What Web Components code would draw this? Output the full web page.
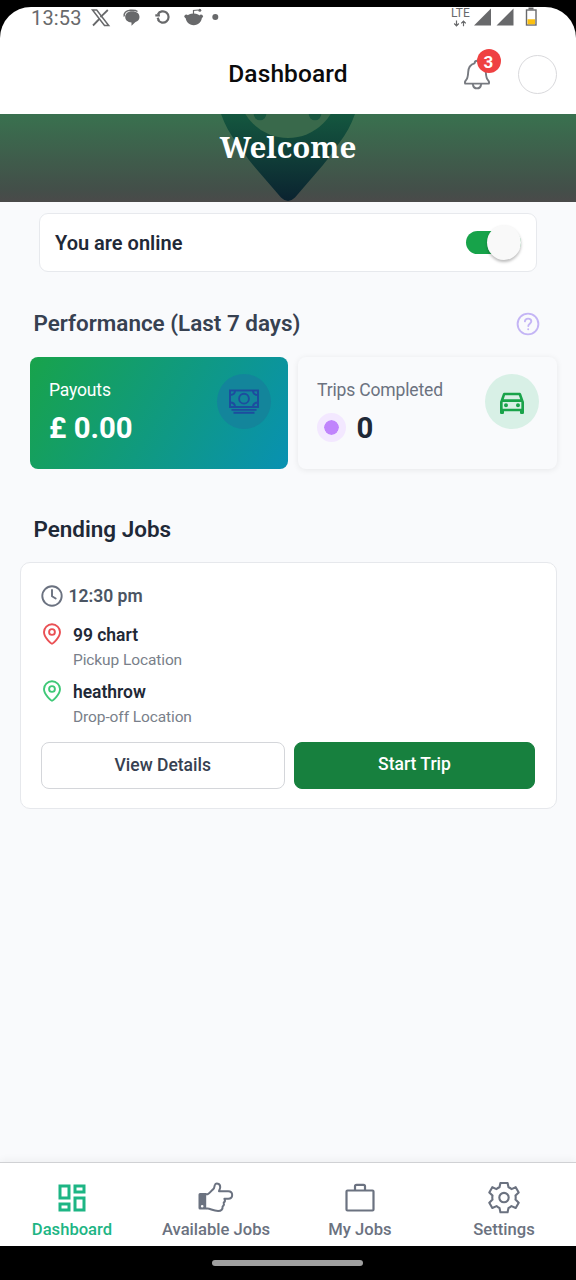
<!DOCTYPE html>
<html lang="en">
<head>
<meta charset="utf-8">
<title>Dashboard</title>
<style>
html,body{margin:0;height:100%;background:#000}
body{font-family:Roboto,"Liberation Sans",sans-serif;overflow:hidden}
</style>
</head>
<body>
<driver-app></driver-app>
<script>
const define = (name, html, setup) => {
  const t = document.createElement('template');
  t.innerHTML = html;
  customElements.define(name, class extends HTMLElement {
    constructor() {
      super();
      this.attachShadow({mode: 'open'}).appendChild(t.content.cloneNode(true));
    }
    connectedCallback() { if (setup) setup(this, this.shadowRoot); }
  });
};

const ICONS = {
  bell: [30, 34, '<g fill="none" stroke="#777a80" stroke-width="1.9" stroke-linejoin="round" stroke-linecap="round"><path d="M3.200 26.600c-.8-1.200-.2-2.200.8-3.400 2-2.200 2-5 2.200-8.200.2-4.300 2.500-7.700 6.300-8.700.3-1.700 1.300-2.500 2.500-2.500s2.200.8 2.500 2.500c3.800 1 6.100 4.400 6.300 8.700.2 3.200.2 6 2.200 8.200 1 1.200 1.600 2.200.8 3.400z"/><path d="M10.800 27c.4 2.900 2 4.400 4.200 4.400s3.800-1.500 4.200-4.400"/></g>'],
  help: [24, 24, '<g fill="none" stroke="#c4b5f5" stroke-width="1.900" stroke-linecap="round"><circle cx="12" cy="12" r="10.400"/><path d="M8.900 9.300c.2-1.800 1.500-2.700 3.200-2.700 1.800 0 3.200 1.100 3.200 2.700 0 2.300-3 2.400-3 4.700"/><path d="M12.200 17.100v.1"/></g>'],
  cash: [30, 26, '<g fill="none" stroke="#1d4c9f" stroke-width="1.900"><rect x="1" y="1.500" width="28" height="16.500"/><circle cx="15" cy="9.700" r="4.900"/><path d="M6 1.500C6 4.300 4 6 1 6M24 1.500C24 4.300 26 6 29 6M6 18c0-2.800-2-4.500-5-4.500M24 18c0-2.800 2-4.500 5-4.500M2.500 20.900h25M4.500 23.800h21"/></g>'],
  car: [32, 32, '<path transform="scale(1.3333)" fill="#19a34a" fill-rule="evenodd" d="M18.900 6C18.700 5.400 18.100 5 17.500 5H6.500C5.800 5 5.300 5.400 5.100 6L3 12V20C3 20.500 3.500 21 4 21H5C5.600 21 6 20.500 6 20V19H18V20C18 20.500 18.500 21 19 21H20C20.500 21 21 20.500 21 20V12L18.900 6M6.800 7H17.100L18.200 10H5.800L6.800 7M19 17H5V12H19V17M7.500 13A1.500 1.500 0 1 1 7.500 16A1.500 1.500 0 1 1 7.500 13M16.500 13A1.500 1.500 0 1 1 16.500 16A1.500 1.500 0 1 1 16.500 13"/>'],
  clock: [22, 22, '<g fill="none" stroke="#6b7280" stroke-width="1.900" stroke-linecap="round" stroke-linejoin="round"><circle cx="11" cy="11" r="9.700"/><path d="M11 5v6.200l3.700 2.300"/></g>'],
  pin: [20, 22, '<g fill="none" stroke="currentColor" stroke-width="1.900" stroke-linejoin="round"><path d="M10 20.700C9 20.700 2 14.600 2 9.100A8 7.800 0 0 1 18 9.100C18 14.600 11 20.700 10 20.700z"/><circle cx="10" cy="9" r="2.900"/></g>'],
  dashboard: [36, 36, '<path transform="scale(1.5)" fill="#1db584" d="M19,5V7H15V5H19M9,5V11H5V5H9M19,13V19H15V13H19M9,17V19H5V17H9M21,3H13V9H21V3M11,3H3V13H11V3M21,11H13V21H21V11M11,15H3V21H11V15Z"/>'],
  hand: [36, 36, '<path fill="#6b7280" fill-rule="evenodd" d="M2 13h6.200v16.500H2a1.500 1.500 0 0 1-1.500-1.500V14.500A1.500 1.500 0 0 1 2 13zM4.200 25a1.300 1.300 0 1 0 0 2.600 1.300 1.300 0 0 0 0-2.600z"/><path fill="none" stroke="#6b7280" stroke-width="2" stroke-linejoin="round" d="M8 14.300h1.500c2.300-1 3.700-3.600 5.800-5.200 1.300-1 .9-2.900 1.700-4.500.8-1.700 5.300-1.500 5.200 2.600-.1 1.700-.9 2.600-1.200 4h9.200c5.300 0 5.300 7.500 0 7.500h-3.800c1 1.800.5 3.200-.7 4 .7 1.800.1 3-1.100 3.800.2 2.700-1.100 4.400-4.500 4.400-5 0-7.700-2.300-10.600-2.300H8"/>'],
  briefcase: [36, 36, '<g fill="none" stroke="#6b7280" stroke-width="2.200" stroke-linejoin="round"><rect x="4.500" y="10.500" width="27" height="20" rx="1"/><path d="M13 10V6.300a1.500 1.500 0 0 1 1.500-1.500h7A1.500 1.500 0 0 1 23 6.300V10"/></g>'],
  gear: [36, 36, '<g transform="translate(18 17.600)" fill="none" stroke="#6b7280" stroke-width="2.100" stroke-linejoin="round"><path d="M-3.600-14.600h7.200l.9 4.300q1.700.6 3 1.800l4.200-1.900 3 5.200-3.200 3.200q.4 2 0 4l3.200 3.200-3 5.200-4.200-1.900q-1.300 1.200-3 1.800l-.9 4.300h-7.200l-.9-4.300q-1.700-.6-3-1.800l-4.200 1.900-3-5.200 3.200-3.200q-.4-2 0-4l-3.200-3.200 3-5.200 4.200 1.900q1.300-1.200 3-1.800z"/><circle r="4.700"/></g>']
};
define('ui-icon', `<style>:host{display:block;flex:none}svg{display:block}</style><svg></svg>`, (el, r) => {
  const [w, h, body] = ICONS[el.getAttribute('name')];
  const svg = r.querySelector('svg');
  svg.setAttribute('width', w); svg.setAttribute('height', h);
  svg.setAttribute('viewBox', `0 0 ${w} ${h}`);
  svg.innerHTML = body;
});

define('status-bar', `<style>
:host{display:flex;height:27px;color:#68696b;box-sizing:border-box;padding:0 38px 0 31px;justify-content:space-between}
.l,.r{display:flex}.l span{font-size:20px;line-height:23px;letter-spacing:.15px;width:51px}
svg{display:block}.lte{font-size:12px;line-height:12px;width:18px}
.net{display:flex;flex-direction:column;width:18px}.net svg{margin:1px 0 0 2px}
</style>
<div class="l"><span>13:53</span>
<svg width="144" height="24" fill="none" stroke="#68696b">
<path d="M10.500 3h4.200l12 15.500h-4.200z" stroke-width="1.500"/><path d="M25.800 3l-7.300 7.200M17.300 12l-6.300 6.500" stroke-width="1.800"/>
<path d="M42.200 9.500c-.8-3 1.800-6 6-6.200 3.500-.2 5.800-.1 7.300 1.200" stroke-width="1.400"/><path d="M50 4.300c4.400 0 7.500 2.200 7.500 5.600 0 2.600-1.600 4.400-4 5.100L49.500 18.800v-3.400c-4-.2-6.300-2.500-6.300-5.400 0-3.300 2.800-5.700 6.800-5.700z" fill="#68696b" stroke="none"/>
<path d="M75.900 7.200A5.700 5.700 0 1 1 75.900 12.800M73.300 8.300h4.600M77 13.800l-1.400-3" stroke-width="2.200"/>
<path d="M103.500 9.500h16.500c0 5-3.600 8.700-8.300 8.700s-8.200-3.700-8.200-8.700z" fill="#68696b" stroke="none"/><ellipse cx="111.500" cy="9.600" rx="6.500" ry="3" fill="#68696b" stroke="none"/><circle cx="104.300" cy="9.300" r="1.900" fill="#68696b" stroke="none"/><circle cx="119" cy="9.300" r="1.900" fill="#68696b" stroke="none"/><path d="M111.500 7.500V3.500l5-.5" stroke-width="1.200"/><circle cx="117.800" cy="3.200" r="1.500" fill="#68696b" stroke="none"/>
<circle cx="133.300" cy="9.900" r="3" fill="#68696b" stroke="none"/></svg></div>
<div class="r"><div class="net"><div class="lte">LTE</div><svg width="14" height="8" fill="none" stroke="#68696b" stroke-width="1.200"><path d="M3.500.5v5M1.200 3.500l2.300 2.300 2.300-2.300M10.500 6.200v-5M8.200 3.300l2.300-2.300 2.300 2.300"/></svg></div>
<svg width="69" height="24"><g fill="#68696b"><path d="M5 18.500L22 1.500v17zM27.500 18.500L44.500 1.500v17z"/><path d="M59.500.5h5v2h-5z"/></g>
<rect x="57.500" y="3" width="9.500" height="15" fill="none" stroke="#68696b" stroke-width="1.400"/><path d="M58.500 12.200h7.500v5h-7.500z" fill="#fbc011"/>
</svg></div>`);

define('app-header', `<style>
:host{display:grid;grid-template-columns:1fr auto 1fr;align-items:center;height:80px;box-sizing:border-box}
h1{margin:0;font-size:24.500px;font-weight:500;color:#0b0b0c;line-height:30px;letter-spacing:.1px}
.actions{display:flex;justify-content:flex-end;align-items:center;gap:25px;padding-right:19.500px}
.bell{position:relative;left:-.5px}
.badge{position:absolute;left:14.500px;top:-8.500px;width:24px;height:24px;border-radius:50%;background:#ef4142;color:#fff;font-weight:700;font-size:17px;line-height:26px;text-align:center}
.avatar{width:37px;height:37px;border:1.500px solid #d9d9dc;border-radius:50%}
</style><span></span><h1><slot></slot></h1>
<div class="actions"><div class="bell"><ui-icon name="bell"></ui-icon><div class="badge">3</div></div><div class="avatar"></div></div>`);

define('welcome-banner', `<style>
:host{display:grid;height:88px;background:linear-gradient(#39714f,#434f49 85%,#4a4a4a);overflow:hidden;justify-items:center;flex:none}
svg,h2{grid-area:1/1}svg{display:block}
h2{margin:0;padding-top:14px;color:#fff;font:700 29.500px/38px "Noto Serif","DejaVu Serif Condensed","DejaVu Serif",serif;z-index:1}
</style>
<svg width="144" height="88"><defs><linearGradient id="g" x1="0" y1="0" x2="0" y2="1"><stop offset="0" stop-color="#14573f"/><stop offset="1" stop-color="#0b2330"/></linearGradient></defs>
<path fill="url(#g)" d="M5 0C9 11 14 20 20 28C27 37 31 44 37 51L65 83.500Q72 90.500 79 83.500L107 51C113 44 117 37 124 28C130 20 135 11 139 0z"/>
<circle cx="72" cy="-26" r="50" fill="#39694b"/><circle cx="44" cy="0" r="6.300" fill="#195740"/><circle cx="99" cy="0" r="6.300" fill="#195740"/></svg>
<h2><slot></slot></h2>`);

define('online-toggle', `<style>
:host{display:flex;align-items:center;justify-content:space-between;height:59px;box-sizing:border-box;margin:0 39px;padding:0 15px 0 15px;background:#fff;border:1.500px solid #e7e9ed;border-radius:9px}
span{font-size:20px;font-weight:600;color:#1f2937;line-height:24px;padding-top:1px}
.track{width:55px;height:23px;border-radius:12px;background:#17a34a;display:flex;justify-content:flex-end;align-items:center}
.knob{width:34px;height:35px;border-radius:50%;background:#f9f9f9;box-shadow:0 2px 3px #0004}
</style><span><slot></slot></span><div class="track"><div class="knob"></div></div>`);

define('section-title', `<style>
:host{display:flex;align-items:center;justify-content:space-between;height:28px;padding:0 36px 0 33.500px;font-size:22.450px;font-weight:600;color:#1f2937}
::slotted(ui-icon){padding-top:1px}
</style><span><slot></slot></span><slot name="end"></slot>`);

define('stat-card', `<style>
:host{display:flex;justify-content:space-between;box-sizing:border-box;height:112px;border-radius:8px;padding:17px 18px 0 19px;background:#f9fafc;box-shadow:0 1px 6px #00000014;color:#6b7280}
:host([tone=green]){background:linear-gradient(120deg,#18a34b,#0891b2);color:#fff;box-shadow:none;padding-right:17px}
.label{font-size:17.500px;letter-spacing:-.15px;line-height:24px;padding-top:4px}
.value{display:flex;align-items:center;gap:10.500px;font-size:29.300px;font-weight:700;line-height:36px;padding-top:8px;color:#1f2937}
:host([tone=green]) .value{color:#fff}
.disc{width:54px;height:55px;border-radius:50%;background:#d8f0e6;display:flex;align-items:center;justify-content:center;flex:none}
:host([tone=green]) .disc{background:#13859b}
</style><div><div class="label"><slot name="label"></slot></div><div class="value"><slot></slot></div></div><div class="disc"><slot name="icon"></slot></div>`);

define('status-dot', `<style>:host{display:block;width:15px;height:15px;border-radius:50%;background:#c084fc;border:7.500px solid #f3e8ff;background-clip:padding-box;margin-top:-2px}</style>`);

define('job-stop', `<style>
:host{display:flex;gap:11px;height:56.800px}
ui-icon{padding-top:1px;margin-left:1px}.t{font-size:17.500px;letter-spacing:-.03px;font-weight:600;color:#1f2937;line-height:27px}.s{font-size:15.500px;letter-spacing:-.1px;line-height:23px;color:#797f8a}
</style><ui-icon name="pin"></ui-icon><div><div class="t"><slot></slot></div><div class="s"><slot name="sub"></slot></div></div>`);

define('app-button', `<style>
:host{display:block;box-sizing:border-box;height:47px;border-radius:8px;border:1.500px solid #d4d6da;text-align:center;font-size:17.500px;font-weight:500;line-height:45px;color:#374151;background:#fff}
:host([primary]){background:#17803e;border-color:#17803e;color:#fff;line-height:43px}
</style><slot></slot>`);

define('job-card', `<style>
:host{display:block;box-sizing:border-box;height:247px;margin:19px 19px 0 20px;padding:19px 21px 0 20px;background:#fff;border:1.500px solid #e6e8ec;border-radius:10px}
.time{display:flex;align-items:center;gap:5.500px;height:28px;font-size:17.500px;font-weight:600;color:#4b5563;margin-bottom:12px}
.actions{display:grid;grid-template-columns:243.500px 1fr;gap:9.500px;margin-top:6px}
</style><div class="time"><ui-icon name="clock"></ui-icon><slot name="time"></slot></div><slot></slot><div class="actions"><slot name="action"></slot></div>`);

define('tab-item', `<style>
:host{display:flex;flex-direction:column;align-items:center;flex:1;padding-top:17px;color:#6b7280;font-size:16.600px;font-weight:500;line-height:22px;gap:3px;white-space:nowrap}
:host([active]){color:#1db584}
</style><slot name="icon"></slot><span><slot></slot></span>`);
define('tab-bar', `<style>
:host{display:flex;height:84px;box-sizing:border-box;background:#fff;border-top:1.500px solid #d0d1d4;box-shadow:0 -2px 8px #0000000c;flex:none}
</style><slot></slot>`);

define('driver-app', `<style>
:host{display:flex;flex-direction:column;width:576px;height:1280px;background:#000;box-sizing:border-box;padding-top:7px}
.screen{height:1239px;display:flex;flex-direction:column;border-radius:31px 31px 0 0;background:#fff;overflow:hidden}
main{flex:1;background:#f9fafc;padding-top:11px}
.perf{margin-top:37px;color:#374151}.pend{margin-top:46px}
.stats{display:grid;grid-template-columns:258px 259px;gap:10px;padding:20px 0 0 30px}
.home{flex:1;display:flex;justify-content:center;padding:14px 1px 0 0}.home i{width:151px;height:6px;border-radius:3px;background:#a0a0a0}
.red{color:#ea5054}.grn{color:#3fc877}
</style>
<div class="screen">
<status-bar></status-bar><app-header>Dashboard</app-header><welcome-banner>Welcome</welcome-banner>
<main><online-toggle>You are online</online-toggle>
<section-title class="perf">Performance (Last 7 days)<ui-icon slot="end" name="help"></ui-icon></section-title>
<div class="stats">
<stat-card tone="green"><span slot="label">Payouts</span>£ 0.00<ui-icon slot="icon" name="cash"></ui-icon></stat-card>
<stat-card><span slot="label">Trips Completed</span><status-dot></status-dot><span>0</span><ui-icon slot="icon" name="car"></ui-icon></stat-card>
</div>
<section-title class="pend">Pending Jobs</section-title>
<job-card><span slot="time">12:30 pm</span>
<job-stop class="red">99 chart<span slot="sub">Pickup Location</span></job-stop>
<job-stop class="grn">heathrow<span slot="sub">Drop-off Location</span></job-stop>
<app-button slot="action">View Details</app-button><app-button slot="action" primary>Start Trip</app-button></job-card>
</main>
<tab-bar><tab-item active><ui-icon slot="icon" name="dashboard"></ui-icon>Dashboard</tab-item><tab-item><ui-icon slot="icon" name="hand"></ui-icon>Available Jobs</tab-item><tab-item><ui-icon slot="icon" name="briefcase"></ui-icon>My Jobs</tab-item><tab-item><ui-icon slot="icon" name="gear"></ui-icon>Settings</tab-item></tab-bar>
</div><div class="home"><i></i></div>`);
</script>
</body>
</html>
